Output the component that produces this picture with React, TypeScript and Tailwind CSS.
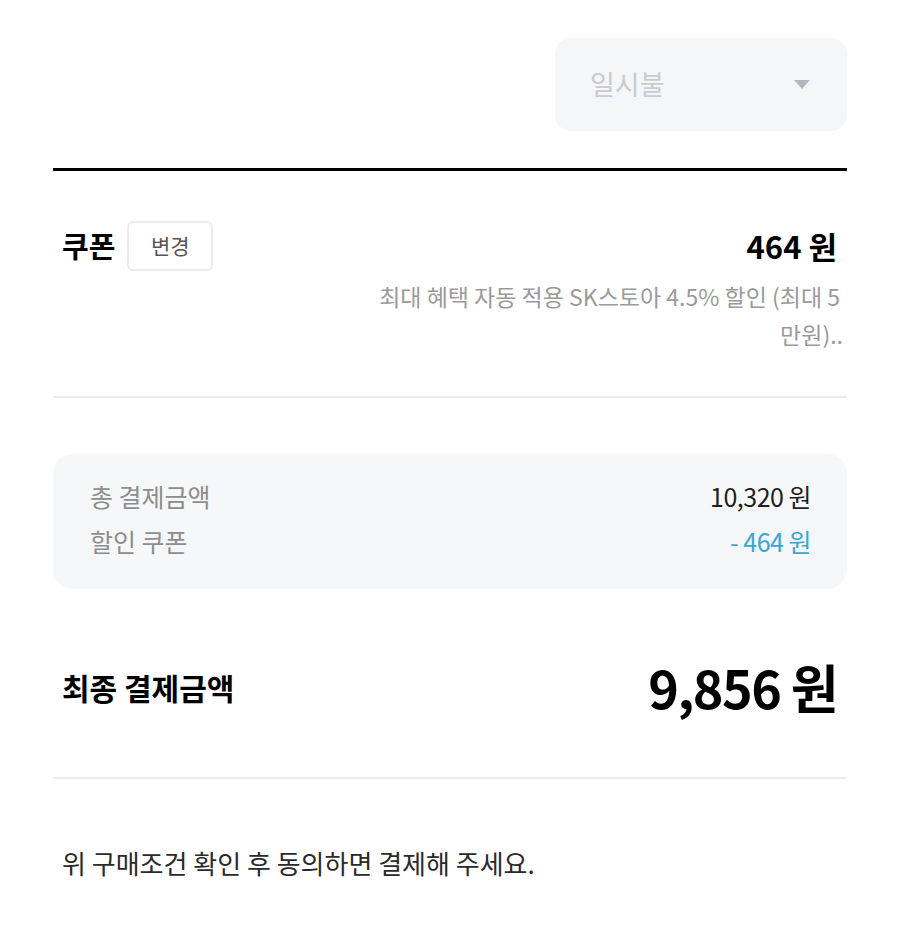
export default function App() {
  return (
    <div
      className="min-h-screen bg-white px-[53px] pt-[38px]"
      style={{ fontFamily: '"Noto Sans CJK KR", "Noto Sans", sans-serif' }}
    >
      <div className="flex justify-end">
        <div className="flex h-[93px] w-[292px] items-center justify-between rounded-[16px] bg-[#f5f6f8] pl-[35px] pr-[37px]">
          <span className="text-[27px] text-[#c9cbce]">일시불</span>
          <svg width="16" height="10" viewBox="0 0 16 10">
            <path d="M0 0h16L8 9z" fill="#b4b6b9" />
          </svg>
        </div>
      </div>

      <div className="mt-[37px] h-[3px] bg-black" />

      <section className="border-b-2 border-[#eceef0] pb-[43px] pl-[9px] pr-[10px] pt-[50px]">
        <div className="flex items-center justify-between">
          <div className="flex items-center gap-[12px]">
            <span className="text-[29px] font-bold text-black">쿠폰</span>
            <button className="flex h-[50px] w-[86px] items-center justify-center rounded-[6px] border-2 border-[#ebecee] text-[21px] text-[#555]">
              변경
            </button>
          </div>
          <span className="text-[31px] font-bold text-black">464 원</span>
        </div>
        <div className="mr-[-6px] mt-[6px] text-right text-[23px] leading-[38px] text-[#9a9a9a]">
          <div className="pr-[3px]">최대 혜택 자동 적용 SK스토아 4.5% 할인 (최대 5</div>
          <div>만원)..</div>
        </div>
      </section>

      <section className="mt-[56px] rounded-[20px] bg-[#f6f7f9] pb-[30px] pl-[37px] pr-[36px] pt-[24px]">
        <div className="flex items-center justify-between text-[25px] leading-[36px]">
          <span className="text-[#8d8d8d]">총 결제금액</span>
          <span className="tracking-[-0.5px] text-[#1e1e1e]">10,320 원</span>
        </div>
        <div className="mt-[9px] flex items-center justify-between text-[25px] leading-[36px]">
          <span className="text-[#8d8d8d]">할인 쿠폰</span>
          <span className="tracking-[-0.5px] text-[#3aa6d6]">- 464 원</span>
        </div>
      </section>

      <section className="flex items-center justify-between border-b-2 border-[#eceef0] pb-[60px] pl-[9px] pr-[10px] pt-[68px]">
        <span className="text-[30px] font-bold text-black">최종 결제금액</span>
        <span className="text-[52px] font-bold leading-[60px] tracking-[-1.5px] text-black">9,856 원</span>
      </section>

      <p className="mt-[66px] pl-[9px] text-[26px] leading-[36px] text-[#2a2a2a]">
        위 구매조건 확인 후 동의하면 결제해 주세요.
      </p>
    </div>
  );
}
